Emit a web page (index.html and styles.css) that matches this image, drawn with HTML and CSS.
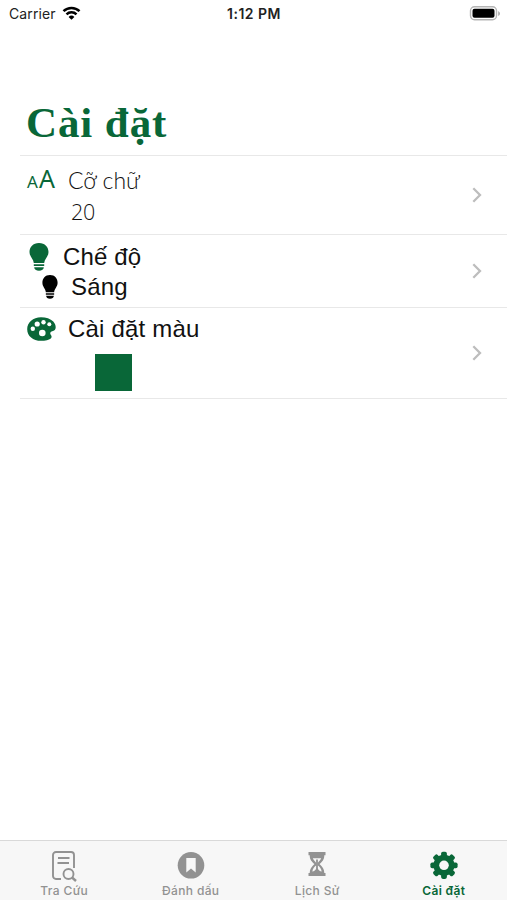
FILE: index.html
```html
<!DOCTYPE html>
<html lang="vi">
<head>
<meta charset="utf-8">
<title>Cài đặt</title>
<link rel="stylesheet" href="styles.css">
</head>
<body>
<svg class="defs" width="0" height="0" aria-hidden="true">
  <symbol id="bulb" viewBox="0 0 20 28">
    <path d="M10 0C4 0 .5 4 .5 9c0 4.800 4 6.800 4.300 11h10.400c.3-4.200 4.300-6.200 4.300-11C19.500 4 16 0 10 0Z"/>
    <path d="M4.800 21.200h10.400V23H4.800ZM5.200 24.200h9.600c0 2.300-2 3.500-4.800 3.500s-4.800-1.200-4.800-3.500Z"/>
  </symbol>
  <symbol id="chevron" viewBox="0 0 10 16">
    <path d="M1.300 1.300 8 8l-6.700 6.700" fill="none" stroke="currentColor" stroke-width="2.300"/>
  </symbol>
</svg>
<div class="screen">
  <header class="status">
    <div class="carrier"><span>Carrier</span>
      <svg width="19" height="14" viewBox="0 0 18 14"><g fill="none" stroke="#000" stroke-width="2.500"><path d="M1 5.200a11.300 11.300 0 0 1 16 0"/><path d="M4 8.300a7.100 7.100 0 0 1 10 0"/></g><path d="M9 13.800 6.100 10.900a4.100 4.100 0 0 1 5.800 0Z"/></svg>
    </div>
    <div class="time">1:12 PM</div>
    <svg class="battery" width="32" height="15" viewBox="0 0 32 15"><rect x="1.500" y=".8" width="26" height="13" rx="4" fill="#fff" stroke="#b5b5b5" stroke-width="1.400"/><rect x="3.500" y="2.800" width="22" height="9" rx="2" fill="#000"/><path d="M29.200 5v5q1.800-1 1.800-2.500T29.200 5Z" fill="#aaa"/></svg>
  </header>
  <h1><span>Cài đặt</span></h1>
  <main class="list">
    <section class="row size">
      <div class="body">
        <div class="line"><span class="letters"><small>A</small><b>A</b></span><span class="label">Cỡ chữ</span></div>
        <div class="value">20</div>
      </div>
      <svg class="chev" width="10" height="16"><use href="#chevron"/></svg>
    </section>
    <section class="row mode">
      <div class="body">
        <div class="line"><svg class="green" width="20" height="28"><use href="#bulb"/></svg><span class="label">Chế độ</span></div>
        <div class="line value"><svg width="16" height="24" viewBox="0 0 20 28" preserveAspectRatio="none"><use href="#bulb" width="20" height="28"/></svg><span class="label">Sáng</span></div>
      </div>
      <svg class="chev" width="10" height="16"><use href="#chevron"/></svg>
    </section>
    <section class="row color">
      <div class="body">
        <div class="line">
          <svg class="green" width="29" height="24" viewBox="0 0 29 24"><path d="M14 .2C6 .2.200 5.500.200 12.200.200 19 6 23.800 14 23.800c4 0 8.500-.5 10.300-3.100 1.200-1.900-1.500-3-1-4.900.5-1.800 3.200-1.300 4.500-2.700 1.600-1.800 1-5.700-1.500-8.500C23.500 1.500 19 .2 14 .2Z"/><g fill="#fff"><circle cx="5.800" cy="11.800" r="2.200"/><circle cx="10.200" cy="7" r="2.600"/><circle cx="16.500" cy="5.300" r="2.200"/><circle cx="22.300" cy="7.200" r="2"/><circle cx="15.300" cy="16" r="3.300"/></g></svg>
          <span class="label">Cài đặt màu</span>
        </div>
        <div class="swatch"></div>
      </div>
      <svg class="chev" width="10" height="16"><use href="#chevron"/></svg>
    </section>
  </main>
  <nav class="tabs">
    <div class="tab">
      <svg width="26" height="32" viewBox="0 0 26 32"><g fill="none" stroke="#929292" stroke-width="1.900"><path d="M10 28H5a3 3 0 0 1-3-3V4a3 3 0 0 1 3-3h15a3 3 0 0 1 3 3v13"/><path d="M7 7h11.500M6.500 12H18"/><circle cx="17.500" cy="23" r="5"/><path d="m21 26.500 4 3.500" stroke-width="2.400"/></g></svg>
      <span>Tra Cứu</span>
    </div>
    <div class="tab">
      <svg width="28" height="32" viewBox="0 0 28 32"><circle cx="14" cy="14.300" r="13.300" fill="#929292"/><path d="M9.300 7h9.400v14.500L14 17.500l-4.700 4Z" fill="#f7f7f7"/></svg>
      <span>Đánh dấu</span>
    </div>
    <div class="tab">
      <svg width="18" height="32" viewBox="0 0 18 32"><path d="M.5 1h17v3.200h-1.200c0 4.500-2 6.300-4.800 8.800 2.800 2.500 4.800 5 4.800 9h1.200v3H.5v-3h1.200c0-4 2-6.500 4.800-9-2.800-2.500-4.800-4.300-4.800-8.800H.5Z" fill="#929292"/><path d="M4.800 7.300h8.400c-.8 2.200-3 3.500-3.700 5.200v1.700c2 1.200 3.800 3.500 4.200 6.300-1.800-.2-3.200-1.500-4.700-3.500-1.500 2-2.900 3.300-4.700 3.500.4-2.800 2.200-5.100 4.200-6.300v-1.700C7.800 10.800 5.600 9.500 4.800 7.300Z" fill="#f7f7f7"/><path d="M8.100 8.500h1.800v10H8.100Z" fill="#929292"/></svg>
      <span>Lịch Sử</span>
    </div>
    <div class="tab active">
      <svg width="28" height="32" viewBox="0 0 28 32"><g fill="#096738" transform="translate(14 14.300)"><circle r="10.600"/><g id="teeth"><rect x="-2.900" y="-13.600" width="5.800" height="27.200" rx="1.800"/><rect x="-13.600" y="-2.900" width="27.200" height="5.800" rx="1.800"/></g><use href="#teeth" transform="rotate(45)"/><circle r="4.800" fill="#f7f7f7"/></g></svg>
      <span>Cài đặt</span>
    </div>
  </nav>
</div>
</body>
</html>
```
FILE: styles.css
```css
* { box-sizing: border-box; }
body { margin: 0; background: #fff; color: #111; font-family: "Liberation Sans", sans-serif; }
svg { display: block; flex: none; }
.defs { position: absolute; }
.screen { height: 900px; display: flex; flex-direction: column; overflow: hidden; }
.status { height: 28px; display: grid; grid-template-columns: 1fr auto 1fr; align-items: center; padding: 0 6px 0 9px; font: 14px/28px Inter, sans-serif; color: #222; }
.carrier { display: flex; align-items: center; gap: 6px; letter-spacing: .1px; }
.carrier svg { margin-top: -2px; }
.time { font-weight: 600; font-size: 14px; letter-spacing: .5px; margin-right: 2px; }
.battery { justify-self: end; margin-top: -2px; }
h1 { margin: 0; height: 127px; padding: 69px 0 0 26px; color: #096738; font: bold 43px/52px "Liberation Serif", serif; }
h1 span { display: inline-block; letter-spacing: .9px; }
.list { margin-left: 20px; border-top: 1px solid #e8e8e8; }
.row { display: flex; justify-content: space-between; align-items: center; padding-right: 25px; border-bottom: 1px solid #e8e8e8; }
.body { align-self: flex-start; }
.line { display: flex; align-items: center; }
.label { white-space: nowrap; }
.green { fill: #096738; }
.chev { color: #bdbdbd; }
.size { height: 79px; }
.size .body { padding: 8px 0 0 7px; font: 300 23px/32px Lato, sans-serif; }
.letters { width: 41px; height: 32px; color: #096738; font-family: "Noto Sans", sans-serif; line-height: 28px; white-space: nowrap; }
.letters small { font-size: 17px; font-weight: 400; margin-right: 1px; }
.letters b { font-size: 25px; font-weight: 400; }
.size .value { padding-left: 44px; font: 300 21.500px/32px "Open Sans", sans-serif; letter-spacing: -.3px; }
.mode { height: 73px; }
.mode .body { padding: 7px 0 0 9px; font-size: 24px; }
.mode .line { height: 30px; gap: 14px; letter-spacing: .15px; }
.mode .value { padding-left: 13px; height: 29px; }
.mode .value .label { margin-left: -1px; }
.color { height: 91px; }
.color .body { padding: 6px 0 0 7px; font-size: 24px; }
.color .line { height: 30px; gap: 12px; letter-spacing: .2px; }
.swatch { width: 37px; height: 37px; margin: 10px 0 0 68px; background: #096738; }
.tabs { height: 60px; margin-top: auto; display: grid; grid-template-columns: repeat(4, 1fr); padding-left: 1px; background: #f7f7f7; border-top: 1px solid #d9d9d9; color: #929292; font: 500 12px/15px Inter, sans-serif; }
.tab { display: flex; flex-direction: column; align-items: center; padding-top: 10px; letter-spacing: .35px; }
.active { color: #096738; font-weight: 600; }
```
